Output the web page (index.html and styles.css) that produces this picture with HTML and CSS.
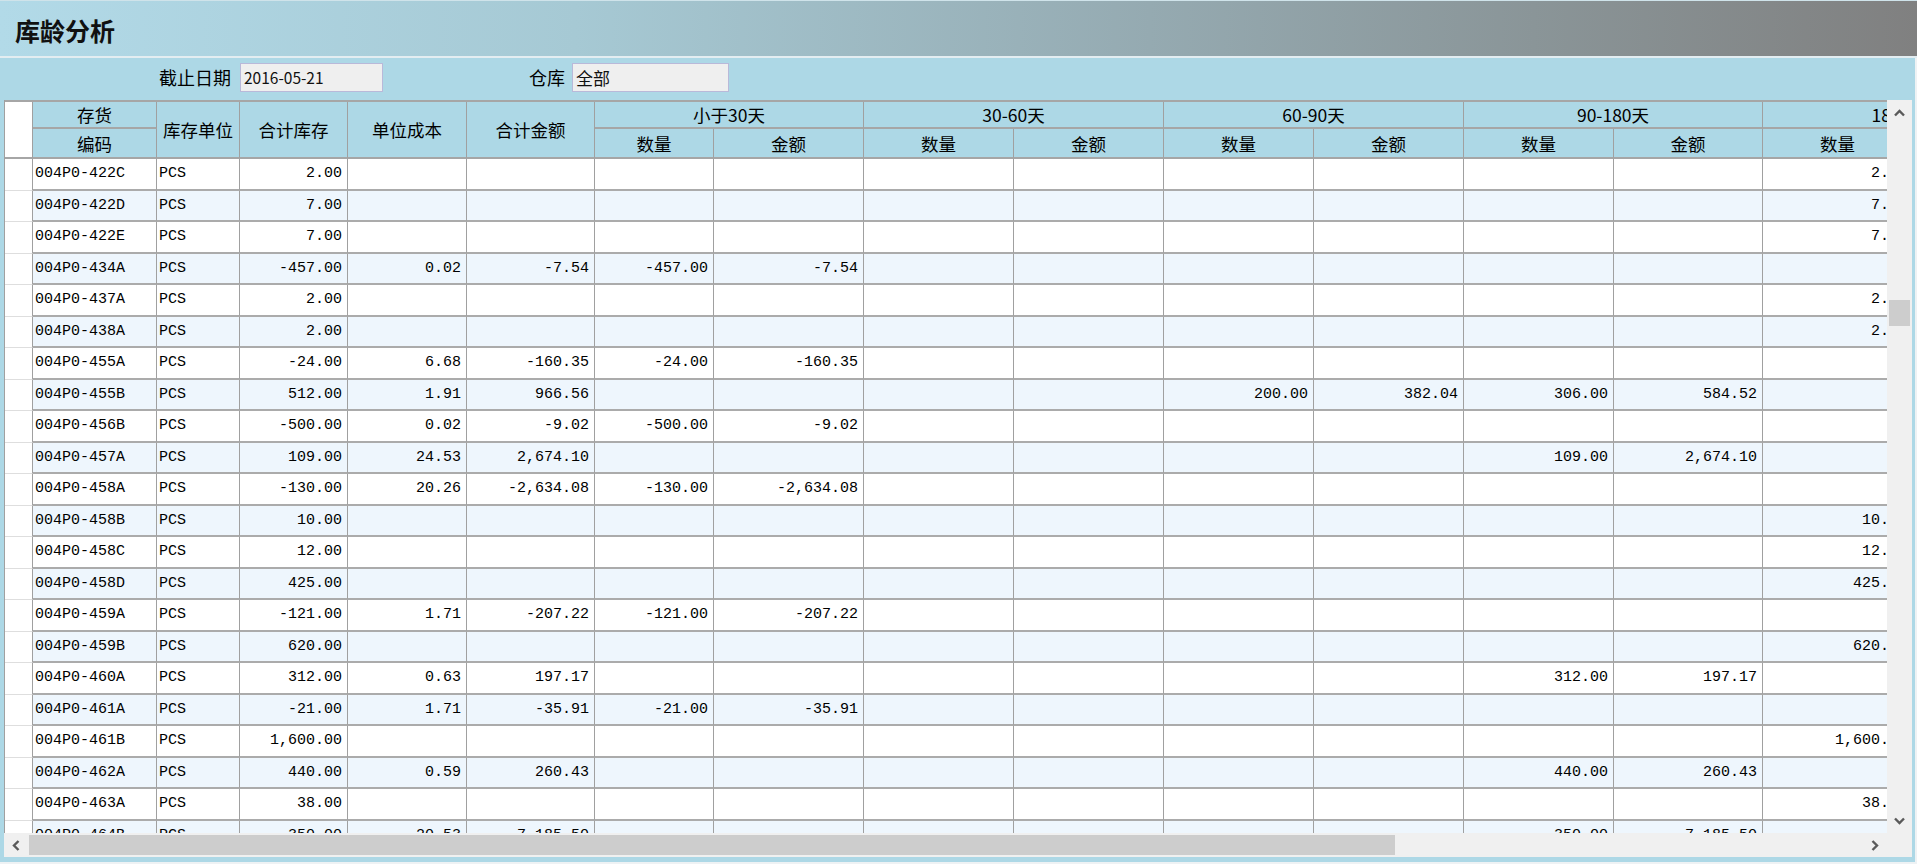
FILE: index.html
```html
<!DOCTYPE html>
<html lang="zh-CN">
<head>
<meta charset="utf-8">
<title>库龄分析</title>
<link rel="stylesheet" href="styles.css">
</head>
<body>
<div class="titlebar"><span class="title">库龄分析</span></div>
<div class="sep"></div>
<div class="panel">
  <div class="filters">
    <span class="lbl">截止日期</span>
    <div class="inp inp1">2016-05-21</div>
    <span class="lbl lbl2">仓库</span>
    <div class="inp inp2">全部</div>
  </div>
  <div class="gridwrap">
    <div class="viewport">
      <div class="head">
        <div class="hc corner"></div>
        <div class="hc">存货</div>
        <div class="hc span2">库存单位</div>
        <div class="hc span2">合计库存</div>
        <div class="hc span2">单位成本</div>
        <div class="hc span2">合计金额</div>
        <div class="hc grp">小于30天</div>
        <div class="hc grp">30-60天</div>
        <div class="hc grp">60-90天</div>
        <div class="hc grp">90-180天</div>
        <div class="hc grp">180-360天</div>
        <div class="hc">编码</div>
        <div class="hc">数量</div><div class="hc">金额</div>
        <div class="hc">数量</div><div class="hc">金额</div>
        <div class="hc">数量</div><div class="hc">金额</div>
        <div class="hc">数量</div><div class="hc">金额</div>
        <div class="hc">数量</div><div class="hc">金额</div>
      </div>
      <div class="rows">
        <div class="row"><span class="rh"></span><span class="tx">004P0-422C</span><span class="tx">PCS</span><span>2.00</span><span></span><span></span><span></span><span></span><span></span><span></span><span></span><span></span><span></span><span></span><span>2.00</span><span></span></div>
        <div class="row"><span class="rh"></span><span class="tx">004P0-422D</span><span class="tx">PCS</span><span>7.00</span><span></span><span></span><span></span><span></span><span></span><span></span><span></span><span></span><span></span><span></span><span>7.00</span><span></span></div>
        <div class="row"><span class="rh"></span><span class="tx">004P0-422E</span><span class="tx">PCS</span><span>7.00</span><span></span><span></span><span></span><span></span><span></span><span></span><span></span><span></span><span></span><span></span><span>7.00</span><span></span></div>
        <div class="row"><span class="rh"></span><span class="tx">004P0-434A</span><span class="tx">PCS</span><span>-457.00</span><span>0.02</span><span>-7.54</span><span>-457.00</span><span>-7.54</span><span></span><span></span><span></span><span></span><span></span><span></span><span></span><span></span></div>
        <div class="row"><span class="rh"></span><span class="tx">004P0-437A</span><span class="tx">PCS</span><span>2.00</span><span></span><span></span><span></span><span></span><span></span><span></span><span></span><span></span><span></span><span></span><span>2.00</span><span></span></div>
        <div class="row"><span class="rh"></span><span class="tx">004P0-438A</span><span class="tx">PCS</span><span>2.00</span><span></span><span></span><span></span><span></span><span></span><span></span><span></span><span></span><span></span><span></span><span>2.00</span><span></span></div>
        <div class="row"><span class="rh"></span><span class="tx">004P0-455A</span><span class="tx">PCS</span><span>-24.00</span><span>6.68</span><span>-160.35</span><span>-24.00</span><span>-160.35</span><span></span><span></span><span></span><span></span><span></span><span></span><span></span><span></span></div>
        <div class="row"><span class="rh"></span><span class="tx">004P0-455B</span><span class="tx">PCS</span><span>512.00</span><span>1.91</span><span>966.56</span><span></span><span></span><span></span><span></span><span>200.00</span><span>382.04</span><span>306.00</span><span>584.52</span><span></span><span></span></div>
        <div class="row"><span class="rh"></span><span class="tx">004P0-456B</span><span class="tx">PCS</span><span>-500.00</span><span>0.02</span><span>-9.02</span><span>-500.00</span><span>-9.02</span><span></span><span></span><span></span><span></span><span></span><span></span><span></span><span></span></div>
        <div class="row"><span class="rh"></span><span class="tx">004P0-457A</span><span class="tx">PCS</span><span>109.00</span><span>24.53</span><span>2,674.10</span><span></span><span></span><span></span><span></span><span></span><span></span><span>109.00</span><span>2,674.10</span><span></span><span></span></div>
        <div class="row"><span class="rh"></span><span class="tx">004P0-458A</span><span class="tx">PCS</span><span>-130.00</span><span>20.26</span><span>-2,634.08</span><span>-130.00</span><span>-2,634.08</span><span></span><span></span><span></span><span></span><span></span><span></span><span></span><span></span></div>
        <div class="row"><span class="rh"></span><span class="tx">004P0-458B</span><span class="tx">PCS</span><span>10.00</span><span></span><span></span><span></span><span></span><span></span><span></span><span></span><span></span><span></span><span></span><span>10.00</span><span></span></div>
        <div class="row"><span class="rh"></span><span class="tx">004P0-458C</span><span class="tx">PCS</span><span>12.00</span><span></span><span></span><span></span><span></span><span></span><span></span><span></span><span></span><span></span><span></span><span>12.00</span><span></span></div>
        <div class="row"><span class="rh"></span><span class="tx">004P0-458D</span><span class="tx">PCS</span><span>425.00</span><span></span><span></span><span></span><span></span><span></span><span></span><span></span><span></span><span></span><span></span><span>425.00</span><span></span></div>
        <div class="row"><span class="rh"></span><span class="tx">004P0-459A</span><span class="tx">PCS</span><span>-121.00</span><span>1.71</span><span>-207.22</span><span>-121.00</span><span>-207.22</span><span></span><span></span><span></span><span></span><span></span><span></span><span></span><span></span></div>
        <div class="row"><span class="rh"></span><span class="tx">004P0-459B</span><span class="tx">PCS</span><span>620.00</span><span></span><span></span><span></span><span></span><span></span><span></span><span></span><span></span><span></span><span></span><span>620.00</span><span></span></div>
        <div class="row"><span class="rh"></span><span class="tx">004P0-460A</span><span class="tx">PCS</span><span>312.00</span><span>0.63</span><span>197.17</span><span></span><span></span><span></span><span></span><span></span><span></span><span>312.00</span><span>197.17</span><span></span><span></span></div>
        <div class="row"><span class="rh"></span><span class="tx">004P0-461A</span><span class="tx">PCS</span><span>-21.00</span><span>1.71</span><span>-35.91</span><span>-21.00</span><span>-35.91</span><span></span><span></span><span></span><span></span><span></span><span></span><span></span><span></span></div>
        <div class="row"><span class="rh"></span><span class="tx">004P0-461B</span><span class="tx">PCS</span><span>1,600.00</span><span></span><span></span><span></span><span></span><span></span><span></span><span></span><span></span><span></span><span></span><span>1,600.00</span><span></span></div>
        <div class="row"><span class="rh"></span><span class="tx">004P0-462A</span><span class="tx">PCS</span><span>440.00</span><span>0.59</span><span>260.43</span><span></span><span></span><span></span><span></span><span></span><span></span><span>440.00</span><span>260.43</span><span></span><span></span></div>
        <div class="row"><span class="rh"></span><span class="tx">004P0-463A</span><span class="tx">PCS</span><span>38.00</span><span></span><span></span><span></span><span></span><span></span><span></span><span></span><span></span><span></span><span></span><span>38.00</span><span></span></div>
        <div class="row"><span class="rh"></span><span class="tx">004P0-464B</span><span class="tx">PCS</span><span>350.00</span><span>20.53</span><span>7,185.50</span><span></span><span></span><span></span><span></span><span></span><span></span><span>350.00</span><span>7,185.50</span><span></span><span></span></div>
      </div>
    </div>
    <div class="vscroll">
      <div class="arrow"><svg width="11" height="8" viewBox="0 0 11 8"><polyline points="1,6.5 5.5,2 10,6.5" fill="none" stroke="#5a5a5a" stroke-width="2.4"/></svg></div>
      <div class="vtrack"><div class="vthumb"></div></div>
      <div class="arrow"><svg width="11" height="8" viewBox="0 0 11 8"><polyline points="1,1.5 5.5,6 10,1.5" fill="none" stroke="#5a5a5a" stroke-width="2.4"/></svg></div>
    </div>
  </div>
  <div class="hscroll">
    <div class="harrow"><svg width="8" height="11" viewBox="0 0 8 11"><polyline points="6.5,1 2,5.5 6.5,10" fill="none" stroke="#5a5a5a" stroke-width="2.4"/></svg></div>
    <div class="htrack"><div class="hthumb"></div></div>
    <div class="harrow"><svg width="8" height="11" viewBox="0 0 8 11"><polyline points="1.5,1 6,5.5 1.5,10" fill="none" stroke="#5a5a5a" stroke-width="2.4"/></svg></div>
    <div class="hcorner"></div>
  </div>
</div>
</body>
</html>
```
FILE: styles.css
```css
* { box-sizing: border-box; }
html, body { margin: 0; padding: 0; }
body {
  width: 1917px;
  height: 864px;
  overflow: hidden;
  background: #eef2f4;
  font-family: "Noto Sans CJK SC", "Noto Sans", sans-serif;
  color: #000;
}
.titlebar {
  height: 56px;
  border-top: 1px solid #cfe3ea;
  background: linear-gradient(to right, #b2dae8 0%, #a6c9d4 30%, #95aab1 60%, #8a9598 80%, #808080 100%);
  display: flex;
  align-items: center;
  padding: 2px 0 0 15px;
}
.title {
  font-size: 25px;
  font-weight: bold;
  color: #111;
}
.sep { height: 2px; background: #e3edf1; }
.panel {
  height: 804px;
  margin: 0 2px 2px 0;
  padding: 0 3px 5px 4px;
  background: #add8e6;
  display: flex;
  flex-direction: column;
}
.filters {
  height: 42px;
  display: flex;
  align-items: flex-start;
  padding: 5px 0 0 155px;
}
.lbl {
  font-size: 18px;
  line-height: 29px;
  margin-right: 9px;
}
.lbl2 { margin-left: 146px; margin-right: 7px; }
.inp {
  height: 29px;
  background: #efefef;
  border: 1px solid #b9b9d9;
  font-size: 15.5px;
  line-height: 27px;
  padding-left: 3px;
  color: #111;
}
.inp1 { width: 143px; }
.inp2 { width: 157px; font-size: 17px; }
.gridwrap {
  height: 733px;
  display: flex;
}
.viewport {
  flex: 1;
  overflow: hidden;
  border-left: 1px solid #a0a0a0;
  background: #fff;
  --cols: 28px 124px 83px 108px 119px 128px 119px 150px 150px 150px 150px 150px 150px 149px 150px 150px;
}
.head {
  display: grid;
  grid-template-columns: var(--cols);
  grid-template-rows: 27px 30px;
  width: 2058px;
  border-top: 2px solid #a6a6a6;
  background: #add8e6;
}
.hc {
  border-right: 1px solid #a0a0a0;
  border-bottom: 2px solid #a6a6a6;
  display: flex;
  align-items: center;
  justify-content: center;
  font-size: 17.5px;
  white-space: nowrap;
  overflow: hidden;
}
.corner { grid-row: span 2; background: #fff; }
.span2 { grid-row: span 2; }
.grp { grid-column: span 2; }
.row {
  display: grid;
  grid-template-columns: var(--cols);
  height: 31.5px;
  width: 2058px;
}
.row > span {
  border-right: 1px solid #a0a0a0;
  border-bottom: 2px solid #ababab;
  display: flex;
  align-items: center;
  justify-content: flex-end;
  padding-right: 5px;
  font-family: "Liberation Mono", monospace;
  font-size: 15px;
  white-space: nowrap;
  overflow: hidden;
  background: #fff;
}
.row:nth-child(even) > span { background: #eef6fd; }
.row > span.tx { justify-content: flex-start; padding: 0 0 0 2px; }
.row > span.rh {
  background: #fff;
  border-bottom: 1px solid #dedede;
}
.row:nth-child(even) > span.rh { background: #fff; }
.vscroll {
  width: 25px;
  background: #f0f0f0;
  display: flex;
  flex-direction: column;
}
.arrow {
  height: 25px;
  display: flex;
  align-items: center;
  justify-content: center;
}
.vtrack { flex: 1; padding: 175px 2px 0 2px; }
.vthumb { height: 26px; background: #cdcdcd; }
.hscroll {
  height: 24px;
  background: #f0f0f0;
  display: flex;
}
.harrow {
  width: 24px;
  display: flex;
  align-items: center;
  justify-content: center;
}
.htrack { flex: 1; padding: 2px 0 2px 1px; }
.hthumb { width: 1366px; height: 100%; background: #cdcdcd; }
.hcorner { width: 25px; }
```
